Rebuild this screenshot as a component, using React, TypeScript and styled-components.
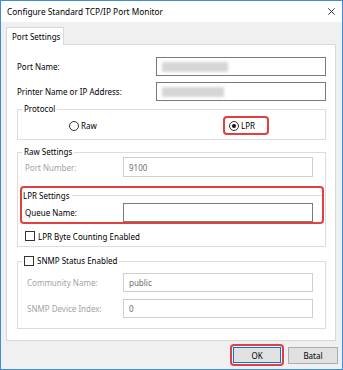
import React from "react";
import styled, { createGlobalStyle } from "styled-components";

const Global = createGlobalStyle`
  html, body { margin: 0; padding: 0; background: #fff; }
  body { font-family: "Noto Sans", "Open Sans", sans-serif; font-size: 8px; color: #000; }
  * { box-sizing: border-box; }
`;

const Window = styled.div`
  width: 343px;
  height: 370px;
  border: 1px solid #3c8ddc;
  display: flex;
  flex-direction: column;
  background: #f0f0f0;
`;

const TitleBar = styled.div`
  height: 21px;
  flex: none;
  background: #fff;
  display: flex;
  align-items: center;
  justify-content: space-between;
  padding: 0 7px 0 6px;
  font-size: 8.3px;
`;

const Body = styled.div`
  flex: 1;
  display: flex;
  flex-direction: column;
  padding: 5px 4px 0 5px;
`;

const TabStrip = styled.div`
  display: flex;
`;

const Tab = styled.div`
  width: 58px;
  height: 18px;
  margin-bottom: -1px;
  background: #fff;
  border: 1px solid #d9d9d9;
  border-bottom: none;
  position: relative;
  z-index: 1;
  padding-left: 5px;
  display: flex;
  align-items: center;
`;

const Panel = styled.div`
  height: 297px;
  margin-right: 2px;
  background: #fff;
  border: 1px solid #d9d9d9;
  padding: 12px 8px 0 10px;
  display: flex;
  flex-direction: column;
`;

const FieldRow = styled.div<{ $mt?: number; $cols: string; $pl?: number; $h?: number }>`
  display: grid;
  grid-template-columns: ${(p) => p.$cols};
  align-items: center;
  height: ${(p) => p.$h ?? 19}px;
  margin-top: ${(p) => p.$mt ?? 0}px;
  padding-left: ${(p) => p.$pl ?? 0}px;
`;

const Label = styled.span<{ $disabled?: boolean }>`
  color: ${(p) => (p.$disabled ? "#a3a3a3" : "#000")};
  white-space: nowrap;
`;

const Input = styled.div<{ $disabled?: boolean }>`
  height: 100%;
  border: 1px solid ${(p) => (p.$disabled ? "#cfcfcf" : "#7a7a7a")};
  background: #fff;
  display: flex;
  align-items: center;
  padding-left: 5px;
  color: ${(p) => (p.$disabled ? "#6e6e6e" : "#000")};
`;

const Blur = styled.span<{ $w: number }>`
  display: block;
  width: ${(p) => p.$w}px;
  height: 10px;
  background: #d6d6d6;
  filter: blur(1.5px);
`;

const Group = styled.fieldset<{ $mt: number; $pb: number }>`
  margin: ${(p) => p.$mt}px 1px 0 0;
  border: 1px solid #dcdcdc;
  padding: 0 1px ${(p) => p.$pb}px 2px;
  min-width: 0;
`;

const Legend = styled.legend<{ $h?: number }>`
  padding: 0 2px;
  margin-left: 2px;
  height: ${(p) => p.$h ?? 10}px;
  line-height: ${(p) => p.$h ?? 10}px;
  display: flex;
  align-items: center;
`;

const RadioRow = styled.div`
  display: grid;
  grid-template-columns: 203px auto;
  align-items: center;
  height: 19px;
  margin-top: 2px;
`;

const Option = styled.label<{ $pl?: number }>`
  display: flex;
  align-items: center;
  padding-left: ${(p) => p.$pl ?? 0}px;
`;

const Radio = styled.span<{ $checked?: boolean }>`
  width: 10px;
  height: 10px;
  border-radius: 50%;
  border: 1px solid #333;
  background: #fff;
  margin-right: 2px;
  display: flex;
  align-items: center;
  justify-content: center;
  &::after {
    content: "";
    display: ${(p) => (p.$checked ? "block" : "none")};
    width: 4px;
    height: 4px;
    border-radius: 50%;
    background: #111;
  }
`;

const Highlight = styled.div`
  border: 2px solid #e2403c;
  border-radius: 4px;
`;

const LprOption = styled(Highlight)`
  width: 46px;
  height: 19px;
  display: flex;
  align-items: center;
  padding-left: 4px;
`;

const LprBox = styled(Highlight)`
  margin-top: 9px;
  height: 38px;
  display: flex;
  flex-direction: column;
`;

const SubHeader = styled.div`
  height: 14px;
  display: flex;
  align-items: center;
  padding-left: 1px;
  &::after {
    content: "";
    flex: 1;
    height: 1px;
    background: #dcdcdc;
    margin-left: 2px;
  }
`;

const Checkbox = styled.span`
  width: 10px;
  height: 10px;
  border: 1px solid #333;
  background: #fff;
  margin-right: 3px;
  flex: none;
`;

const CheckRow = styled.label`
  display: flex;
  align-items: center;
  height: 16px;
  margin-top: 4px;
  padding-left: 5px;
`;

const Footer = styled.div`
  flex: 1;
  display: flex;
  justify-content: flex-end;
  align-items: center;
  gap: 4px;
`;

const OkFrame = styled(Highlight)`
  padding: 1px;
`;

const Button = styled.button<{ $default?: boolean; $w: number; $h: number }>`
  width: ${(p) => p.$w}px;
  height: ${(p) => p.$h}px;
  background: #e1e1e1;
  border: 1px solid ${(p) => (p.$default ? "#0078d7" : "#adadad")};
  font: inherit;
  color: #000;
  padding: 0;
  display: flex;
  align-items: center;
  justify-content: center;
`;

export default function App() {
  return (
    <>
      <Global />
      <Window>
        <TitleBar>
          <span>Configure Standard TCP/IP Port Monitor</span>
          <svg width="7" height="7" viewBox="0 0 7 7">
            <path d="M0.3 0.3 L6.7 6.7 M6.7 0.3 L0.3 6.7" stroke="#222" strokeWidth="0.9" />
          </svg>
        </TitleBar>
        <Body>
          <TabStrip>
            <Tab>Port Settings</Tab>
          </TabStrip>
          <Panel>
            <FieldRow $cols="139px 170px">
              <Label>Port Name:</Label>
              <Input>
                <Blur $w={66} />
              </Input>
            </FieldRow>
            <FieldRow $cols="139px 170px" $mt={6}>
              <Label>Printer Name or IP Address:</Label>
              <Input>
                <Blur $w={62} />
              </Input>
            </FieldRow>

            <Group $mt={3} $pb={4}>
              <Legend>Protocol</Legend>
              <RadioRow>
                <Option $pl={49}>
                  <Radio />
                  Raw
                </Option>
                <LprOption>
                  <Radio $checked />
                  LPR
                </LprOption>
              </RadioRow>
            </Group>

            <Group $mt={7} $pb={2}>
              <Legend>Raw Settings</Legend>
              <FieldRow $cols="98px 190px" $pl={5} $h={20}>
                <Label $disabled>Port Number:</Label>
                <Input $disabled>9100</Input>
              </FieldRow>
              <LprBox>
                <SubHeader>LPR Settings</SubHeader>
                <FieldRow $cols="98px 190px" $pl={3} $mt={1}>
                  <Label>Queue Name:</Label>
                  <Input />
                </FieldRow>
              </LprBox>
              <CheckRow>
                <Checkbox />
                LPR Byte Counting Enabled
              </CheckRow>
            </Group>

            <Group $mt={8} $pb={10}>
              <Legend $h={12}>
                <Checkbox />
                SNMP Status Enabled
              </Legend>
              <FieldRow $cols="96px 190px" $pl={7} $mt={6}>
                <Label $disabled>Community Name:</Label>
                <Input $disabled>public</Input>
              </FieldRow>
              <FieldRow $cols="96px 190px" $pl={7} $mt={7}>
                <Label $disabled>SNMP Device Index:</Label>
                <Input $disabled>0</Input>
              </FieldRow>
            </Group>
          </Panel>
          <Footer>
            <OkFrame>
              <Button $default $w={48} $h={16}>
                OK
              </Button>
            </OkFrame>
            <Button $w={50} $h={17}>
              Batal
            </Button>
          </Footer>
        </Body>
      </Window>
    </>
  );
}
